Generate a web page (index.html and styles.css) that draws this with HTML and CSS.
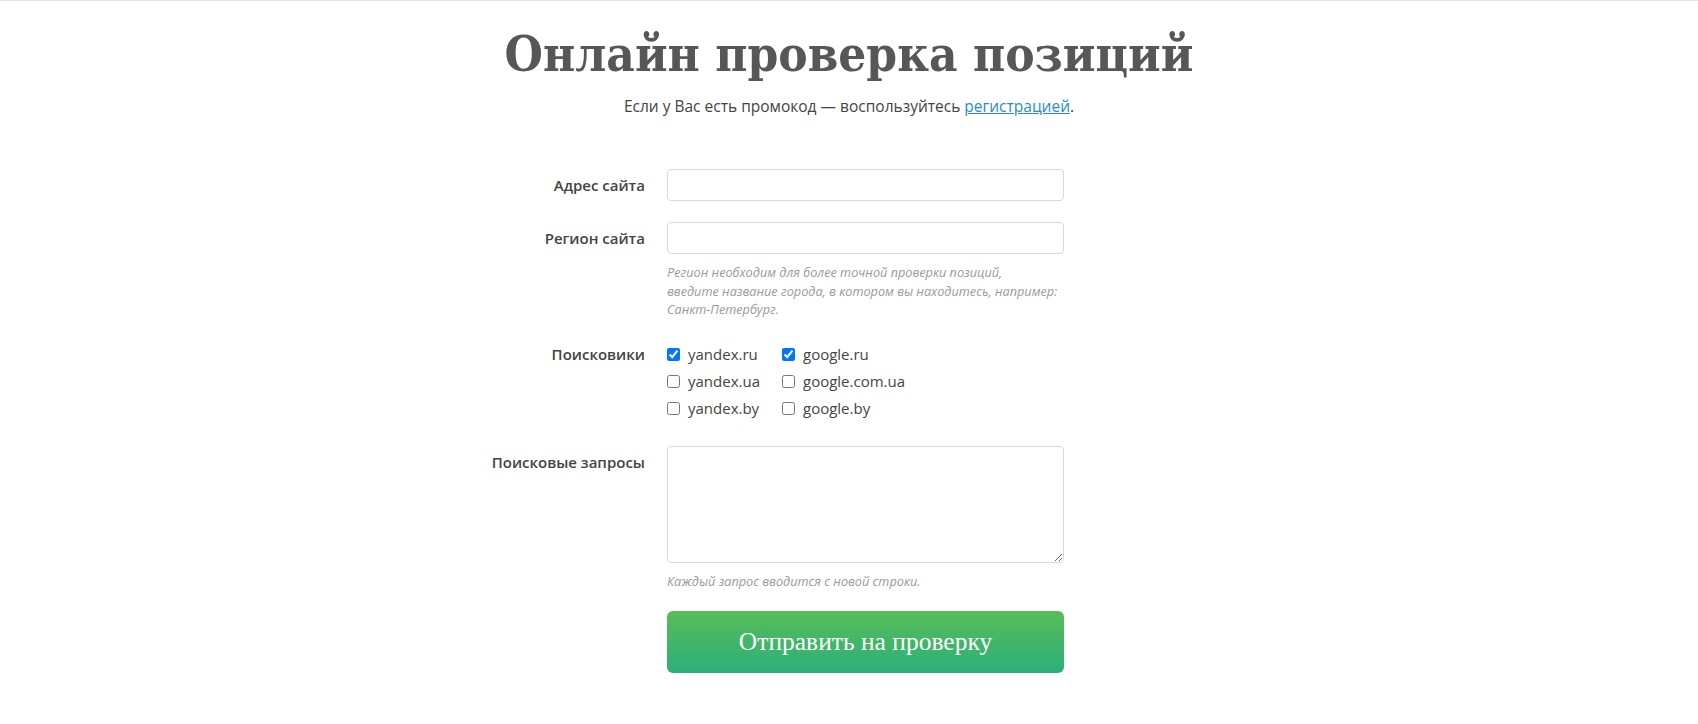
FILE: index.html
```html
<!DOCTYPE html>
<html lang="ru">
<head>
<meta charset="utf-8">
<title>Онлайн проверка позиций</title>
<link rel="stylesheet" href="styles.css">
</head>
<body>
<header class="intro">
  <h1 class="title">Онлайн проверка позиций</h1>
  <p class="lead">Если у Вас есть промокод — воспользуйтесь <a class="lead-link" href="#">регистрацией</a>.</p>
</header>
<form class="check-form">
  <div class="row row-site">
    <label class="row-label" for="site">Адрес сайта</label>
    <div class="row-field"><input class="text-input" id="site" type="text"></div>
  </div>
  <div class="row row-region">
    <label class="row-label" for="region">Регион сайта</label>
    <div class="row-field">
      <input class="text-input" id="region" type="text">
      <p class="hint hint-region">Регион необходим для более точной проверки позиций,<br>введите название города, в котором вы находитесь, например:<br>Санкт-Петербург.</p>
    </div>
  </div>
  <div class="row row-engines">
    <span class="row-label label-engines">Поисковики</span>
    <div class="row-field engines">
      <label class="engine"><input class="engine-box" type="checkbox" checked><span>yandex.ru</span></label>
      <label class="engine"><input class="engine-box" type="checkbox" checked><span>google.ru</span></label>
      <label class="engine"><input class="engine-box" type="checkbox"><span>yandex.ua</span></label>
      <label class="engine"><input class="engine-box" type="checkbox"><span>google.com.ua</span></label>
      <label class="engine"><input class="engine-box" type="checkbox"><span>yandex.by</span></label>
      <label class="engine"><input class="engine-box" type="checkbox"><span>google.by</span></label>
    </div>
  </div>
  <div class="row row-queries">
    <label class="row-label label-queries" for="queries">Поисковые запросы</label>
    <div class="row-field">
      <textarea class="queries" id="queries"></textarea>
      <p class="hint hint-queries">Каждый запрос вводится с новой строки.</p>
    </div>
  </div>
  <div class="row row-submit">
    <span class="row-label"></span>
    <div class="row-field"><button class="submit" type="button">Отправить на проверку</button></div>
  </div>
</form>
</body>
</html>
```

FILE: styles.css
```css
html, body {
  margin: 0;
  padding: 0;
  background: #ffffff;
}

body {
  border-top: 1px solid #e3e3e3;
  font-family: "Open Sans", "Noto Sans", sans-serif;
  color: #444444;
}

.intro {
  text-align: center;
}

.title {
  margin: 0;
  padding-top: 25px;
  font-family: "DejaVu Serif Condensed", "DejaVu Serif", serif;
  font-stretch: condensed;
  font-weight: bold;
  font-size: 49px;
  line-height: 56px;
  color: #575757;
}

.lead {
  margin: 14px 0 0;
  font-size: 15.5px;
  line-height: 20px;
  color: #444444;
}

.lead-link {
  color: #2b8cc4;
  text-decoration: underline;
}

.check-form {
  width: 800px;
  margin: 53px auto 0;
}

.row {
  display: grid;
  grid-template-columns: 196px 397px;
  column-gap: 22px;
  align-items: start;
}

.row-label {
  text-align: right;
  font-size: 15px;
  font-weight: 600;
  line-height: 32px;
  color: #444444;
}

.row-field {
  display: flex;
  flex-direction: column;
}

.text-input {
  box-sizing: border-box;
  width: 397px;
  height: 32px;
  margin: 0;
  border: 1px solid #d9d9d9;
  border-radius: 4px;
  background: #fff;
  font: inherit;
}

.row-region {
  margin-top: 21px;
}

.hint {
  margin: 0;
  font-style: italic;
  font-size: 12.7px;
  line-height: 18.5px;
  color: #9a9a9a;
  white-space: nowrap;
}

.hint-region {
  margin-top: 9px;
}

.row-engines {
  margin-top: 22px;
}

.label-engines {
  line-height: 27px;
}

.engines {
  display: grid;
  grid-template-columns: 115px auto;
}

.engine {
  display: flex;
  align-items: center;
  gap: 8px;
  height: 27px;
  font-size: 15px;
  color: #444444;
}

.engine-box {
  width: 13px;
  height: 13px;
  margin: 0;
}

.row-queries {
  margin-top: 24px;
}

.queries {
  box-sizing: border-box;
  width: 397px;
  height: 117px;
  margin: 0;
  border: 1px solid #d9d9d9;
  border-radius: 4px;
  resize: vertical;
  font: inherit;
}

.hint-queries {
  margin-top: 9px;
}

.row-submit {
  margin-top: 21px;
}

.submit {
  width: 397px;
  height: 62px;
  border: 0;
  border-radius: 6px;
  background: linear-gradient(#58bc57, #2bb07a);
  color: #ffffff;
  font-family: "Liberation Serif", "Times New Roman", serif;
  font-size: 25.5px;
  cursor: pointer;
}
```
